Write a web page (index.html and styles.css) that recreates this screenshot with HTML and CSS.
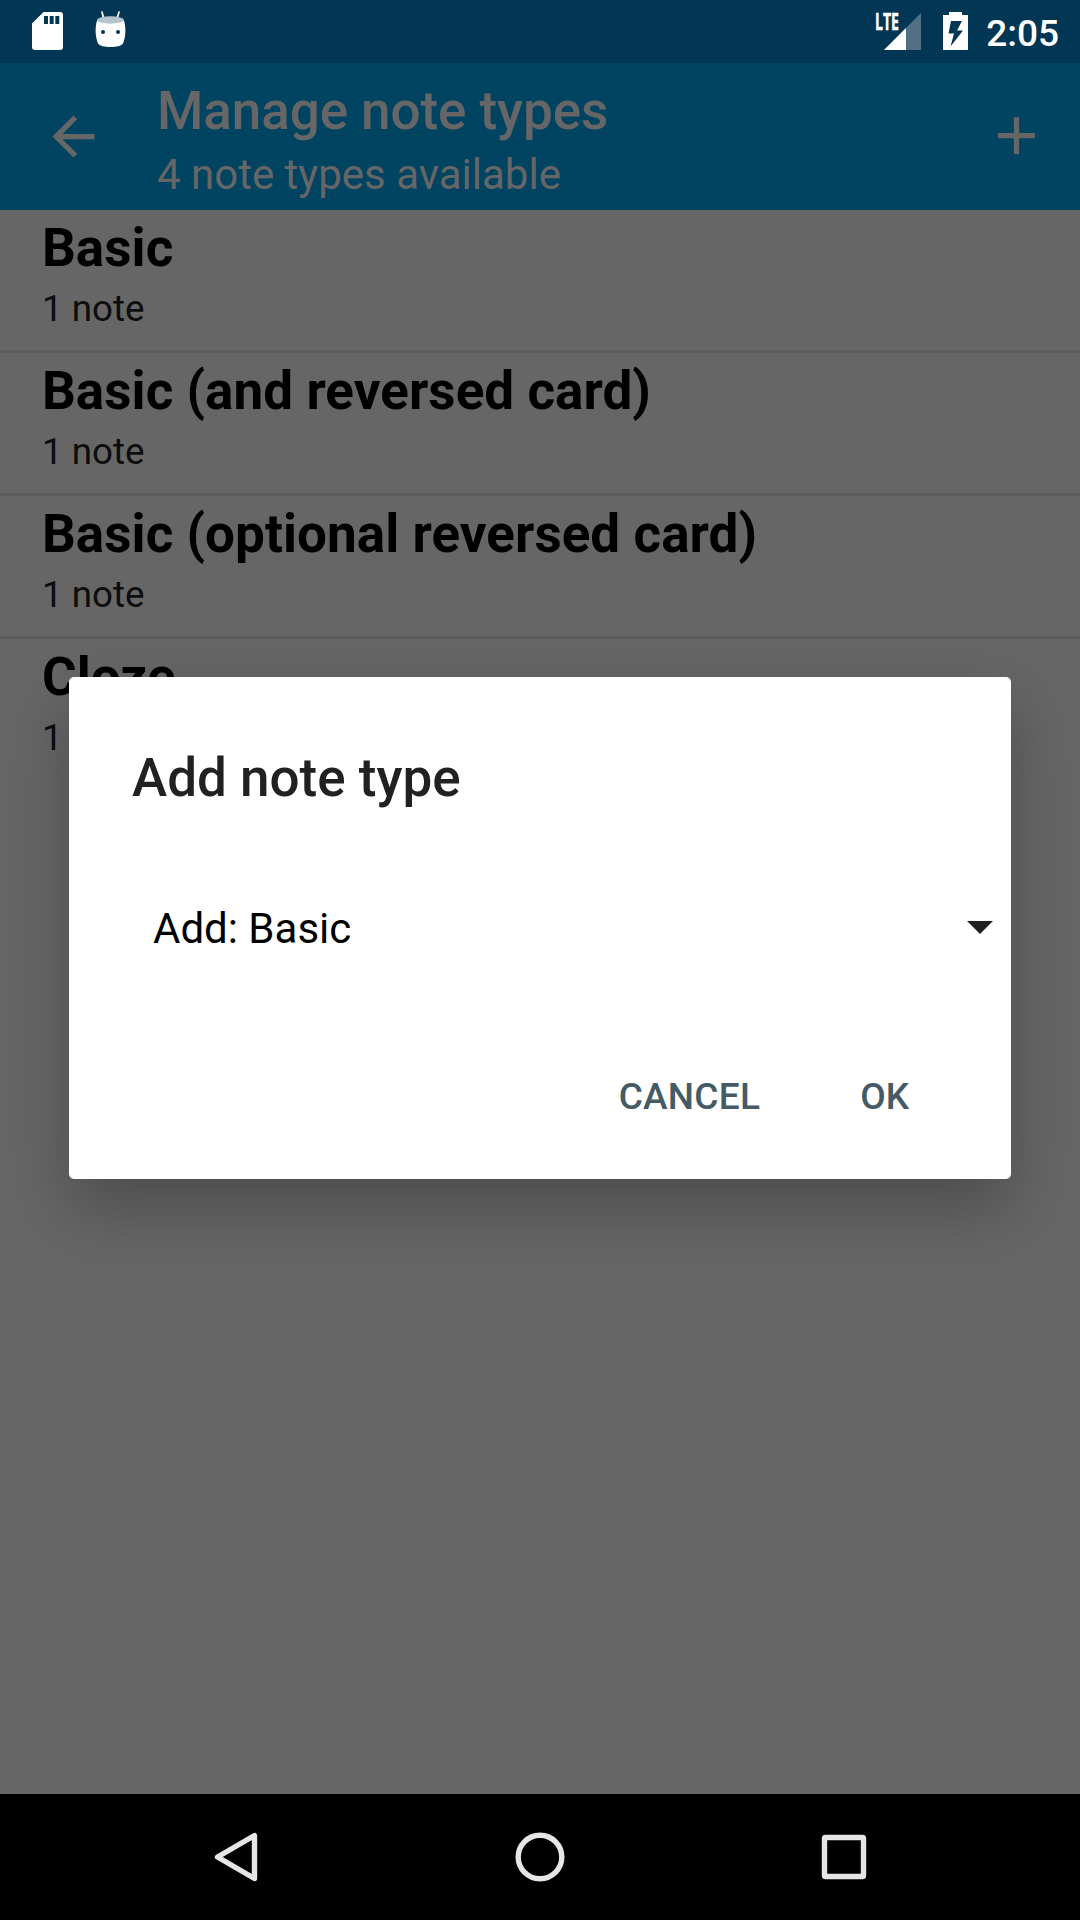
FILE: index.html
```html
<!DOCTYPE html>
<html lang="en">
<head>
<meta charset="utf-8">
<title>Manage note types</title>
<link rel="stylesheet" href="styles.css">
</head>
<body>
<div class="screen">
  <header class="status-bar">
    <div class="status-left">
      <svg class="icon-sd" width="31" height="38" viewBox="0 0 31 38"><path fill="#fff" fill-rule="evenodd" d="M11.500 0H28q3 0 3 3v32q0 3-3 3H3q-3 0-3-3V11.500zM12 4v8h4V4zm5.700 0v8h4V4zm5.600 0v8h4V4z"/></svg>
      <svg class="icon-droid" width="31" height="37" viewBox="0 0 31 37">
        <path fill="none" stroke="#fff" stroke-width="1.700" stroke-linecap="round" d="M7 1l1.800 7M24 1l-2 7"/>
        <path fill="#fff" d="M2 9.500C-.2 17 .3 26 3 32.500 6 37.200 25 37.200 28 32.500 30.700 26 31.200 17 29 9.500z"/>
        <ellipse cx="15.500" cy="9" rx="13.500" ry="3.700" fill="#b5c4cc"/>
        <circle cx="8" cy="21" r="2" fill="#013654"/><circle cx="23" cy="21" r="2" fill="#013654"/>
      </svg>
    </div>
    <div class="status-right">
      <svg class="icon-signal" width="46" height="50" viewBox="0 0 46 50">
        <path fill="#517085" d="M46 13v37H9z"/><path fill="#fff" d="M31 28v22H9z"/>
        <text class="lte" x="0" y="29.500" textLength="24" lengthAdjust="spacingAndGlyphs">LTE</text>
      </svg>
      <svg class="icon-battery" width="25" height="38" viewBox="0 0 25 38"><path fill="#fff" fill-rule="evenodd" d="M6 0h13v3h6v35H0V3h6zM8 9L5.500 21.500H11L7.500 34.500 20 18.500H14L19 9z"/></svg>
      <span class="clock">2:05</span>
    </div>
  </header>
  <div class="app-bar">
    <svg class="icon-back" width="63" height="63" viewBox="0 0 24 24"><path fill="#666" d="M20 11H7.830l5.590-5.590L12 4l-8 8 8 8 1.410-1.410L7.830 13H20z"/></svg>
    <div class="heading">
      <h1 class="title">Manage note types</h1>
      <p class="subtitle">4 note types available</p>
    </div>
    <svg class="icon-add" width="63" height="63" viewBox="0 0 24 24"><path fill="#666" d="M19 13h-6v6h-2v-6H5v-2h6V5h2v6h6z"/></svg>
  </div>
  <main class="list">
    <div class="row"><h2 class="name">Basic</h2><p class="count">1 note</p></div>
    <div class="row"><h2 class="name">Basic (and reversed card)</h2><p class="count">1 note</p></div>
    <div class="row"><h2 class="name">Basic (optional reversed card)</h2><p class="count">1 note</p></div>
    <div class="row"><h2 class="name">Cloze</h2><p class="count">1 note</p></div>
  </main>
  <nav class="nav-bar">
    <svg width="50" height="50" viewBox="0 0 50 50"><path class="nav-line" d="M43.500 3.500v43L6.500 25z"/></svg>
    <svg width="50" height="50" viewBox="0 0 50 50"><circle class="nav-line" cx="25" cy="25" r="21.800"/></svg>
    <svg width="50" height="50" viewBox="0 0 50 50"><rect class="nav-line" x="5.500" y="5.500" width="39" height="39" rx="1"/></svg>
  </nav>
  <section class="dialog">
    <h2 class="dialog-title">Add note type</h2>
    <div class="spinner">
      <span>Add: Basic</span>
      <svg width="26" height="13" viewBox="0 0 26 13"><path fill="#212121" d="M0 0h26L13 13z"/></svg>
    </div>
    <div class="actions">
      <span class="action">CANCEL</span>
      <span class="action">OK</span>
    </div>
  </section>
</div>
</body>
</html>
```
FILE: styles.css
```css
body, h1, h2, p { margin: 0; }
body { font-family: Roboto, sans-serif; }
svg { display: block; flex: none; }

.screen {
  position: relative;
  display: flex;
  flex-direction: column;
  width: 1080px;
  height: 1920px;
  overflow: hidden;
  background: #666;
}

.status-bar {
  box-sizing: border-box;
  display: flex;
  justify-content: space-between;
  height: 63px;
  padding: 0 21px 0 32px;
  background: #013654;
}
.status-left, .status-right { display: flex; align-items: flex-start; }
.status-left { gap: 32px; }
.icon-sd { margin-top: 12px; }
.icon-droid { margin-top: 11px; }
.icon-signal { margin-right: 22px; }
.icon-battery { margin: 12px 18px 0 0; }
.lte { font: 700 22.5px "Open Sans", sans-serif; fill: #fff; stroke: #fff; stroke-width: .5px; }
.clock { margin-top: 12px; font-size: 37px; font-weight: 500; line-height: 43px; color: #fff; }

.app-bar {
  box-sizing: border-box;
  display: flex;
  height: 147px;
  padding: 17px 32px 0 42px;
  background: #014462;
  color: #666;
}
.icon-back { margin-top: 25px; }
.heading { flex: 1; display: flex; flex-direction: column; gap: 8px; padding-left: 52px; }
.title { font-size: 53px; font-weight: 500; line-height: 62px; letter-spacing: -.07px; }
.subtitle { font-size: 42px; line-height: 49px; }
.icon-add { margin-top: 24px; }

.list { flex: 1; }
.row {
  display: flex;
  flex-direction: column;
  gap: 8px;
  padding: 7px 42px 20px;
  border-bottom: 3px solid #5c5c5c;
}
.row:last-child { border-bottom: 0; }
.name { font-size: 53px; font-weight: 700; line-height: 62px; letter-spacing: .05px; color: #000; }
.count { font-size: 36.75px; line-height: 43px; color: #0d0d0d; }

.nav-bar {
  display: flex;
  justify-content: center;
  align-items: center;
  gap: 254px;
  height: 126px;
  background: #000;
}
.nav-line { fill: none; stroke: #e6e6e6; stroke-width: 5.4; stroke-linejoin: round; }

.dialog {
  position: absolute;
  left: 69px;
  top: 677px;
  box-sizing: border-box;
  width: 942px;
  height: 502px;
  padding-top: 70px;
  border-radius: 5px;
  background: #fff;
  box-shadow: 0 29px 66px rgba(0, 0, 0, .25);
}
.dialog-title { padding-left: 63px; font-size: 53px; font-weight: 500; line-height: 62px; color: #212121; }
.spinner {
  display: flex;
  justify-content: space-between;
  align-items: center;
  margin-top: 95px;
  padding: 0 18.5px 0 84px;
  font-size: 42px;
  line-height: 49px;
  color: #000;
}
.spinner svg { margin-bottom: 3px; }
.actions { display: flex; justify-content: flex-end; gap: 100px; margin-top: 122px; padding-right: 101.5px; }
.action { font-size: 37px; font-weight: 500; line-height: 43px; letter-spacing: .25px; color: #455a64; }
```
